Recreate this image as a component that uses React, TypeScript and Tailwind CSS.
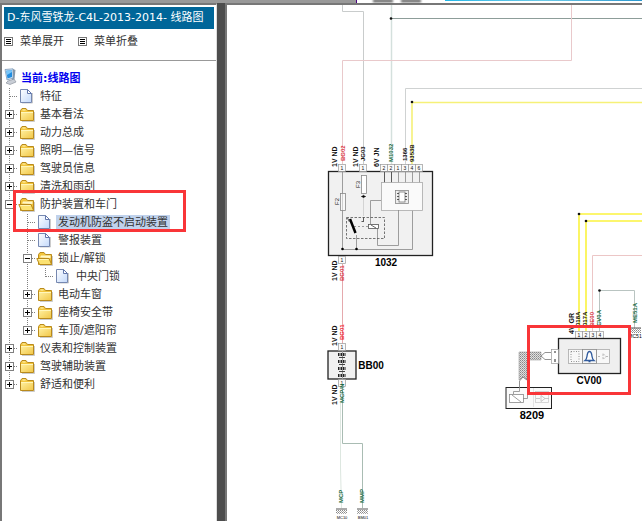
import { useState } from "react";
import type { ReactNode } from "react";

type TreeNode = { label: string; children?: TreeNode[] };

const tree: TreeNode[] = [
  { label: "特征" },
  { label: "基本看法", children: [] },
  { label: "动力总成", children: [] },
  { label: "照明—信号", children: [] },
  { label: "驾驶员信息", children: [] },
  { label: "清洗和雨刮", children: [] },
  {
    label: "防护装置和车门",
    children: [
      { label: "发动机防盗不启动装置" },
      { label: "警报装置" },
      { label: "锁止/解锁", children: [{ label: "中央门锁" }] },
      { label: "电动车窗", children: [] },
      { label: "座椅安全带", children: [] },
      { label: "车顶/遮阳帘", children: [] },
    ],
  },
  { label: "仪表和控制装置", children: [] },
  { label: "驾驶辅助装置", children: [] },
  { label: "舒适和便利", children: [] },
];

const branches = ["防护装置和车门", "锁止/解锁"];

function Joint({ last, mark }: { last?: boolean; mark?: "plus" | "minus" }) {
  return (
    <svg width="18" height="18" className="block shrink-0" shapeRendering="crispEdges">
      <path d={last ? "M9.5 0V9" : "M9.5 0V18"} stroke="#808080" strokeDasharray="1 1" />
      <path d="M10 8.5H18" stroke="#808080" strokeDasharray="1 1" />
      {mark && (
        <>
          <rect x="5.5" y="4.5" width="8" height="8" fill="#fff" stroke="#808080" />
          <path d="M7 8.5H12" stroke="#000" />
          {mark === "plus" && <path d="M9.5 6V11" stroke="#000" />}
        </>
      )}
    </svg>
  );
}

function Rail({ blank }: { blank: boolean }) {
  return (
    <svg width="18" height="18" className="block shrink-0" shapeRendering="crispEdges">
      {!blank && <path d="M9.5 0V18" stroke="#808080" strokeDasharray="1 1" />}
    </svg>
  );
}

function Folder({ open }: { open: boolean }) {
  return (
    <svg width="18" height="18" className="block shrink-0">
      <path d="M4 15.5H16.5V6" fill="none" stroke="#aaa" strokeOpacity=".6" />
      <path d="M2.5 14.5V4.5L4 2.5H8L9.5 4.5H15.5V14.5Z" fill="#f2c53d" stroke="#b98a1c" />
      {open ? (
        <>
          <path d="M4 7.5L5 5.5H14.5V8" fill="#fff7c8" />
          <path d="M.8 8.5H13L15.6 14.5H3.5Z" fill="#fbe272" stroke="#b98a1c" />
          <path d="M2.5 9.5H12.5" stroke="#fff5b5" />
        </>
      ) : (
        <>
          <rect x="3" y="6" width="12" height="8" fill="url(#folderFace)" />
          <path d="M3 6.5H15M4.5 4H7.5" stroke="#fff6bc" />
        </>
      )}
    </svg>
  );
}

function Page() {
  return (
    <svg width="18" height="18" viewBox="0 1 18 18" className="block shrink-0">
      <path d="M4 16H14.5V6" fill="none" stroke="#999" strokeOpacity=".5" />
      <path d="M2.5 2.5H9.5L13.5 6.5V15.5H2.5Z" fill="url(#pageFace)" stroke="#7688b0" />
      <path d="M9.5 2.5V6.5H13.5Z" fill="#fff" stroke="#6378ac" />
    </svg>
  );
}

function Computer() {
  return (
    <svg width="18" height="18" viewBox="0 2 18 18" className="block shrink-0 overflow-visible">
      <path d="M8 13L14 11L16 14L10 16.5L6 15Z" fill="#c9ced6" stroke="#8d949e" strokeWidth=".7" />
      <path d="M13 1L15.5 2L14.5 11L12 12Z" fill="#8c9aa8" />
      <path d="M5 1.5L13 .8L13.2 10L7 12Z" fill="#d4e6f4" stroke="#6b8db0" strokeWidth=".7" />
      <path d="M6.2 2.8L12 2.2V9L7.5 10.5Z" fill="#218de0" />
      <path d="M6.2 2.8L12 2.2V4L7 7Z" fill="#79c6f8" />
    </svg>
  );
}

function ListIcon() {
  return (
    <svg width="10" height="10" className="block shrink-0" shapeRendering="crispEdges">
      <rect x=".5" y=".5" width="8" height="8" fill="#fff" stroke="#777" />
      <path d="M2 2.5H7M2 4.5H7M2 6.5H7" stroke="#000" />
    </svg>
  );
}

type RowsProps = {
  nodes: TreeNode[];
  rails: boolean[];
  open: string[];
  selected: string;
  onToggle: (label: string) => void;
  onSelect: (label: string) => void;
};

function Rows({ nodes, rails, open, selected, onToggle, onSelect }: RowsProps) {
  return (
    <ul>
      {nodes.map((node, i) => {
        const last = i === nodes.length - 1;
        const expanded = open.includes(node.label);
        return (
          <li key={node.label}>
            <div className="flex h-[18px] items-center">
              {rails.map((blank, n) => (
                <Rail key={n} blank={blank} />
              ))}
              {node.children ? (
                <button type="button" aria-label={node.label} aria-expanded={expanded} onClick={() => onToggle(node.label)}>
                  <Joint last={last} mark={expanded ? "minus" : "plus"} />
                </button>
              ) : (
                <Joint last={last} />
              )}
              {node.children ? <Folder open={expanded} /> : <Page />}
              <a
                href="#"
                onClick={() => onSelect(node.label)}
                className={
                  selected === node.label
                    ? "ml-0.5 bg-[#c0d2ec] px-0.5 leading-[16px] whitespace-nowrap"
                    : "ml-0.5 px-0.5 leading-[16px] whitespace-nowrap"
                }
              >
                {node.label}
              </a>
            </div>
            {node.children && expanded && (
              <Rows nodes={node.children} rails={[...rails, last]} open={open} selected={selected} onToggle={onToggle} onSelect={onSelect} />
            )}
          </li>
        );
      })}
    </ul>
  );
}

function Tag({ x, y, color = "#111", size = 6, children }: { x: number; y: number; color?: string; size?: number; children: ReactNode }) {
  return (
    <text transform={`translate(${x} ${y}) rotate(-90)`} fontSize={size} fontWeight="bold" fill={color}>
      {children}
    </text>
  );
}

function Pins({ x, y, labels }: { x: number; y: number; labels: string[] }) {
  return (
    <g>
      {labels.map((label, i) => (
        <g key={i}>
          <rect x={x + i * 7 + 0.5} y={y + 0.5} width="7" height="7" fill="#fafafa" stroke="#999" strokeWidth=".7" />
          <text x={x + i * 7 + 4} y={y + 6} fontSize="5" textAnchor="middle" fill="#111">
            {label}
          </text>
        </g>
      ))}
    </g>
  );
}

function Ground({ x, y }: { x: number; y: number }) {
  return (
    <g>
      <path d={`M${x - 5} ${y}H${x + 6}`} stroke="#555" />
      <rect x={x - 5} y={y} width="11" height="5" fill="url(#hatch)" />
    </g>
  );
}

function Diagram() {
  const red = "#d8323c";
  const green = "#17693f";
  return (
    <svg width="415" height="516" viewBox="227 5 415 516" className="block" fontFamily="'Liberation Sans', Arial, sans-serif" role="img" aria-label="线路图">
      <defs>
        <pattern id="hatch" width="2" height="2" patternUnits="userSpaceOnUse">
          <rect width="1" height="1" fill="#888" />
          <rect x="1" y="1" width="1" height="1" fill="#aaa" />
        </pattern>
      </defs>
      <g fill="none">
        <path d="M342.5 5V11.5H363.5V164" stroke="#c9cccc" />
        <path d="M391.5 5V164" stroke="#d4e0dd" strokeWidth="1.5" />
        <path d="M391 18.5H642" stroke="#8d9d99" />
        <path d="M571.5 5V60.5H342.5V164" stroke="#e9c9cb" />
        <path d="M642 88.5H405.5V164" stroke="#cfd2d2" />
        <path d="M642 102.5H412V164" stroke="#f6f178" strokeWidth="1.6" />
        <path d="M642 214H579V331M642 221H586V331" stroke="#fbf33f" strokeWidth="1.6" />
        <path d="M642 255.5H592.5V331" stroke="#ecc6c6" />
        <path d="M599.5 331V290.5H634.5V328" stroke="#b9c4c1" />
        <path d="M342.5 264V344" stroke="#e5a9ad" />
        <path d="M342.5 386V443.5H362.5V508" stroke="#a9bcb3" />
        <path d="M340.5 403V468L341.5 508" stroke="#dde7e0" />
      </g>
      <g fill="#111">
        <circle cx="391" cy="18.5" r="1.3" />
        <circle cx="412" cy="102" r="1.3" />
        <circle cx="579" cy="214" r="1.3" />
        <circle cx="586" cy="221" r="1.3" />
        <circle cx="599.5" cy="290.5" r="1.3" />
      </g>

      <rect x="328.5" y="171.5" width="104" height="84" fill="#f1f1f1" stroke="#222" strokeWidth="1.3" />
      <Pins x={338} y={164} labels={["1"]} />
      <Pins x={359} y={164} labels={["1"]} />
      <Pins x={380} y={164} labels={["2", "2", "1", "3", "4", "6"]} />
      <Pins x={338} y={256} labels={["1"]} />
      <g fill="none" stroke="#888" strokeWidth=".8">
        <path d="M342.5 172V249.5H412.5V210M356.5 235V249" />
        <rect x="340.5" y="193.5" width="5" height="17" fill="#fff" fillOpacity=".5" />
        <rect x="361.5" y="175.5" width="5" height="18" fill="#fff" />
        <path d="M384.5 172V183M391.5 172V183" stroke="#333" />
        <path d="M398.5 172V183M405.5 172V183M412.5 172V183M419.5 172V183" />
        <rect x="381.5" y="182.5" width="41" height="28" fill="#fafafa" stroke="#aaa" />
        <rect x="395.5" y="190.5" width="13" height="13" fill="#eee" />
        <rect x="399" y="192" width="6" height="10" fill="#fff" stroke="#777" />
        <path d="M397 193.5H399M397 196.5H399M397 199.5H399M405 193.5H407M405 196.5H407M405 199.5H407" stroke="#333" />
        <path d="M381 200.5H370.5V224M377.5 228V245.5H398.5V210" />
        <path d="M363.5 194V216" stroke="#ccc" />
        <path d="M361 196.5H366M363.5 217V221M361.5 221.5H364" stroke="#333" />
        <path d="M346.5 217.5H384.5V238.5H346.5Z" stroke="#555" strokeDasharray="2.5 1.5" />
        <path d="M354 226.5H368" strokeDasharray="2 2" />
        <rect x="368.5" y="224.5" width="10" height="4" fill="#fff" stroke="#555" />
        <path d="M371 225L376 228" stroke="#444" />
      </g>
      <path d="M350 219L355.5 233" stroke="#000" strokeWidth="2.5" />
      <path d="M347.5 218L349.5 222" stroke="#555" />
      <circle cx="342.5" cy="249" r="1.3" />
      <circle cx="356.5" cy="249" r="1.3" />
      <circle cx="363.5" cy="196.5" r="1.3" />
      <text transform="translate(339 205) rotate(-90)" fontSize="6" fill="#222">F2</text>
      <text transform="translate(360 188) rotate(-90)" fontSize="6" fill="#222">F3</text>

      <Tag x={337} y={167} size={7}>1V ND</Tag>
      <Tag x={345} y={161} color={red}>BG02</Tag>
      <Tag x={358} y={167} size={7}>1V ND</Tag>
      <Tag x={365} y={161}>JG03</Tag>
      <Tag x={379} y={167} size={7}>6V JN</Tag>
      <Tag x={393} y={162} color={green}>M1032</Tag>
      <Tag x={407} y={161}>1366</Tag>
      <Tag x={414} y={162}>9353B</Tag>
      <text x="386" y="266" fontSize="10" fontWeight="bold" textAnchor="middle">1032</text>
      <Tag x={337} y={281} size={7}>1V ND</Tag>
      <Tag x={344} y={281} color={red}>BG01</Tag>
      <Tag x={337} y={346} size={7}>1V ND</Tag>
      <Tag x={344} y={340} color="#f0222a">BG01</Tag>

      <rect x="328" y="351" width="28" height="28" fill="#f1f1f1" stroke="#222" strokeWidth="1.3" />
      <Pins x={338} y={343} labels={["1"]} />
      <Pins x={338} y={379} labels={["1"]} />
      <path d="M342.5 351V379" stroke="#999" />
      <path d="M338 354.5H346M338 361.5H346M338 368.5H346M338 375.5H346" stroke="#222" strokeWidth="3" strokeDasharray="1.5 1" />
      <path d="M339 357.5H345M339 364.5H345M339 371.5H345" stroke="#444" />
      <text x="371" y="369" fontSize="10" fontWeight="bold" textAnchor="middle">BB00</text>
      <Tag x={337} y={405} size={7}>1V ND</Tag>
      <Tag x={344} y={403} color={green}>MCP/N</Tag>
      <Tag x={343} y={503} color={green}>MCP</Tag>
      <Tag x={364} y={503} color={green}>MMP</Tag>
      <Ground x={341} y={509} />
      <Ground x={362} y={509} />
      <text x="342" y="519" fontSize="4" textAnchor="middle">MC10</text>
      <text x="363" y="519" fontSize="4" textAnchor="middle">BM01</text>

      <Tag x={574} y={334} size={7}>4V GR</Tag>
      <Tag x={580} y={326}>018A</Tag>
      <Tag x={587} y={326}>017A</Tag>
      <Tag x={594} y={327} color={red}>BE00</Tag>
      <Tag x={601} y={326} color={green}>CV0A</Tag>
      <Tag x={637} y={323} color={green}>ME51A</Tag>
      <Ground x={635} y={328} />
      <text x="635" y="338" fontSize="5" textAnchor="middle">MC51</text>
      <Pins x={575} y={331} labels={["1", "2", "3", "4"]} />
      <rect x="558.5" y="338.5" width="62" height="35" fill="#efefef" stroke="#222" strokeWidth="1.3" />
      <g fill="#f8f8f8" stroke="#aaa" strokeWidth=".8">
        <rect x="568.5" y="349.5" width="14" height="14" />
        <rect x="596.5" y="349.5" width="13" height="14" />
        <rect x="571" y="351.5" width="8" height="10" stroke="#777" strokeDasharray="1 1.5" />
        <path d="M598 356.5H601M606 356.5H609M603 353.5L606 356.5L603 359.5Z" fill="none" strokeDasharray="2 1" />
        <rect x="582.5" y="349.5" width="14" height="14" stroke="#888" />
      </g>
      <path d="M585 360.5C587 359 586.8 357 587.3 354.5C587.7 352.5 588.5 351.5 589.5 351.5S591.3 352.5 591.7 354.5C592.2 357 592 359 594 360.5ZM588.5 361.5H590.5" fill="#fff" stroke="#315b9d" strokeWidth="1.3" />
      <text x="589" y="384" fontSize="10" fontWeight="bold" textAnchor="middle">CV00</text>

      <rect x="551.5" y="349.5" width="7" height="14" fill="#fff" stroke="#999" strokeWidth=".7" />
      <path d="M555 351V353M555 359V362" stroke="#222" />
      <path d="M519 352H541V360H527V380L523 377L519 380Z" fill="#e0e0e0" />
      <path d="M519 352H541V360H527V380L523 377L519 380Z" fill="url(#hatch)" stroke="#888" strokeWidth=".5" />
      <path d="M551 352.5H545L541 356L545 359.5H551M519.5 387V381L523 377L527 380" fill="none" stroke="#777" strokeWidth=".8" />
      <rect x="506" y="387.5" width="45.5" height="21" fill="#fafafa" stroke="#222" />
      <g fill="none" stroke="#888" strokeWidth=".8">
        <rect x="509.5" y="394.5" width="14" height="8" fill="#fff" />
        <path d="M512 395L521 402M519.5 387V391.5H513.5V394M523 398.5H527.5V391" />
        <rect x="535.5" y="391.5" width="13" height="11" stroke="#ccc" />
        <path d="M536 398.5H540M545 398.5H549M541 395.5L545 398.5L541 401.5Z" stroke="#bbb" />
        <path d="M533.5 388V407" stroke="#ddd" />
      </g>
      <text x="532" y="419" fontSize="11" fontWeight="bold" textAnchor="middle">8209</text>
      <rect x="528.5" y="326.5" width="101" height="67" fill="none" stroke="#f93538" strokeWidth="3" />
    </svg>
  );
}

export default function App() {
  const [open, setOpen] = useState(branches);
  const [selected, setSelected] = useState("发动机防盗不启动装置");
  const toggle = (label: string) =>
    setOpen(open.includes(label) ? open.filter((item) => item !== label) : [...open, label]);

  return (
    <div className="flex h-screen flex-col overflow-hidden bg-[#999] text-[11px] text-[#333] [font-family:'DejaVu_Sans','Noto_Sans_CJK_SC',sans-serif]">
      <svg width="0" height="0" className="absolute">
        <defs>
          <linearGradient id="folderFace" x2="1" y2="1">
            <stop stopColor="#fff0a0" />
            <stop offset="1" stopColor="#f2c84b" />
          </linearGradient>
          <linearGradient id="pageFace" x2="1" y2="1">
            <stop stopColor="#fff" />
            <stop offset="1" stopColor="#c3d9fb" />
          </linearGradient>
        </defs>
      </svg>
      <header className="flex h-[3px] shrink-0">
        <div className="w-[357px] shrink-0 border-r border-[#4b0082]" />
        <div className="flex flex-1 bg-white">
          <div className="ml-4 h-0.5 w-5 bg-[#333] blur-[1px]" />
          <div className="ml-2 h-0.5 w-5 bg-[#333] blur-[1px]" />
          <div className="ml-6 h-px flex-1 bg-linear-to-r from-[#20b8e8] via-[#6ccbe9] to-[#2997cf]" />
        </div>
      </header>
      <div className="flex min-h-0 flex-1">
        <aside className="relative w-[217px] shrink-0 border-t-2 border-r border-l-2 border-t-[#777] border-r-[#ddd] border-l-[#777] bg-white">
          <h1 className="mx-0.5 mt-0.5 h-[22px] overflow-hidden bg-[#006699] pl-[3px] leading-[22px] whitespace-nowrap text-white">
            D-东风雪铁龙-C4L-2013-2014- 线路图
          </h1>
          <div className="flex h-8 items-start gap-[14px] border-b border-[#999] pt-[5px] pl-0.5">
            <button type="button" className="flex h-4 items-center gap-1.5" onClick={() => setOpen(branches)}>
              <ListIcon />
              菜单展开
            </button>
            <button type="button" className="flex h-4 items-center gap-1.5" onClick={() => setOpen([])}>
              <ListIcon />
              菜单折叠
            </button>
          </div>
          <nav className="-ml-0.5 pt-[9px]">
            <div className="flex h-[18px] items-center gap-[3px] font-bold text-[#0000ee]">
              <Computer />
              <span className="leading-[18px]">当前:线路图</span>
            </div>
            <Rows nodes={tree} rails={[]} open={open} selected={selected} onToggle={toggle} onSelect={setSelected} />
          </nav>
          <div className="pointer-events-none absolute top-[185px] left-[11px] h-[42px] w-[173px] border-3 border-[#f93538]" />
        </aside>
        <div className="w-2 shrink-0 bg-[#4d4d4d]" />
        <main className="min-w-0 flex-1 overflow-hidden border-t-2 border-l-2 border-t-[#777] border-l-[#777] bg-white">
          <Diagram />
        </main>
      </div>
    </div>
  );
}
